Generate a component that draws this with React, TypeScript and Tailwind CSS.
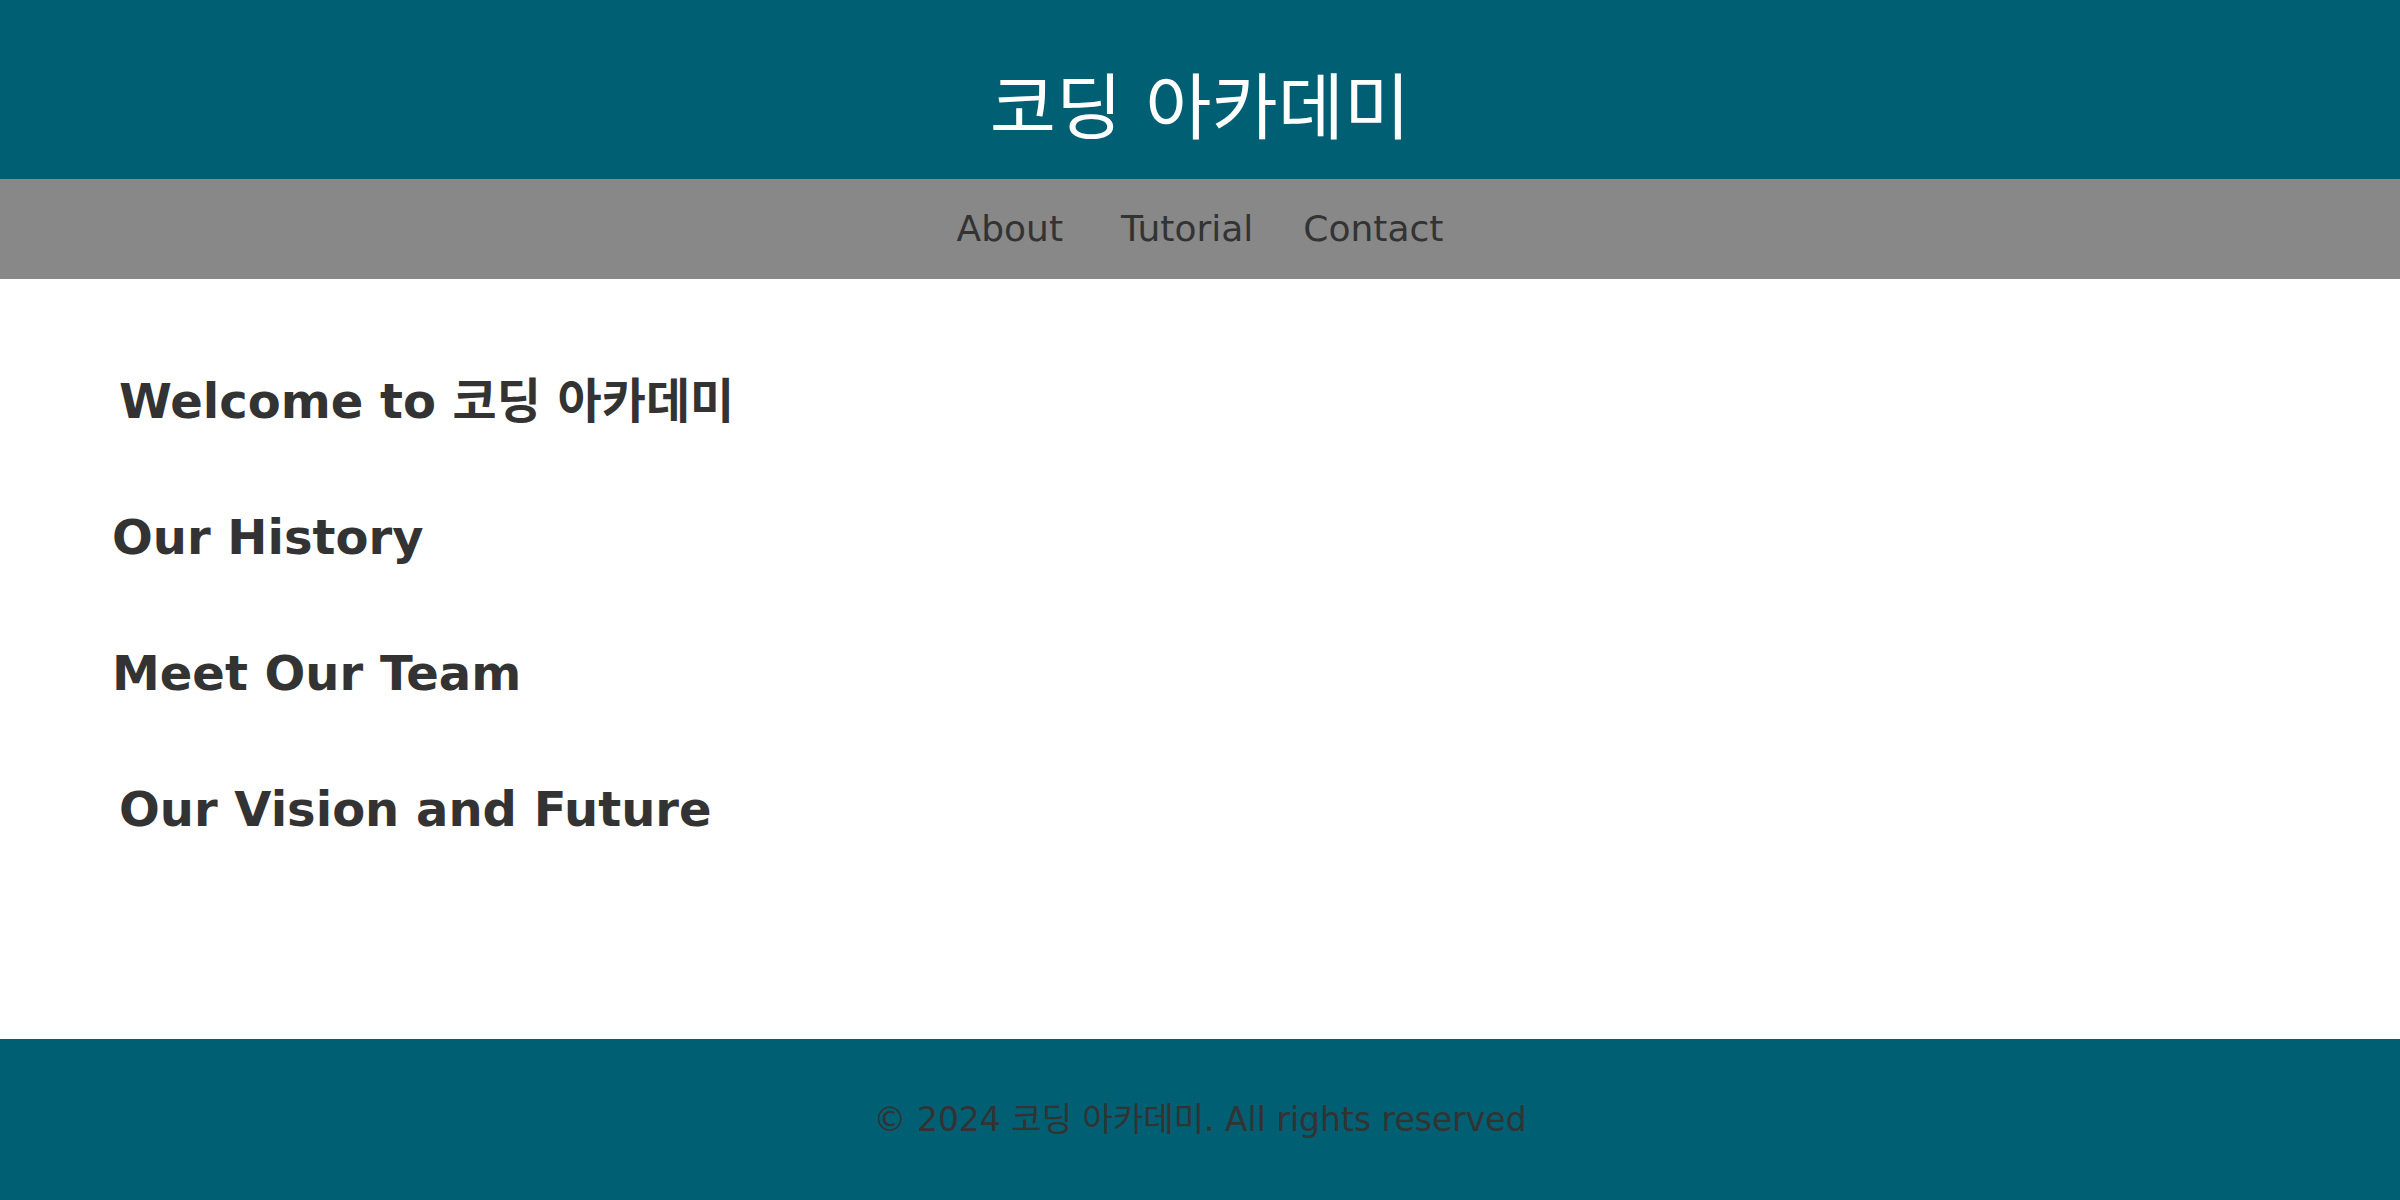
export default function App() {
  const font = "font-['DejaVu_Sans','Noto_Sans_CJK_KR',sans-serif]";

  return (
    <div className={`min-h-screen flex flex-col bg-white ${font}`}>
      {/* Header */}
      <header className="h-[179px] bg-[#005f73] flex justify-center pt-[66px]">
        <h1 className="text-[72px] leading-[84px] font-normal text-white">
          코딩 아카데미
        </h1>
      </header>

      {/* Nav */}
      <nav className="h-[100px] bg-[#888888] flex items-center justify-center text-[36px] text-[#333333]">
        <a className="mr-[58px]">About</a>
        <a className="mr-[50px]">Tutorial</a>
        <a>Contact</a>
      </nav>

      {/* Content */}
      <main className="h-[760px] flex flex-col gap-[80px] pt-[94px] text-[48px] leading-[56px] font-bold text-[#333333]">
        <section className="pl-[119px]">
          <h2>Welcome to 코딩 아카데미</h2>
        </section>
        <section className="pl-[112px]">
          <h2>Our History</h2>
        </section>
        <section className="pl-[112px]">
          <h2>Meet Our Team</h2>
        </section>
        <section className="pl-[119px]">
          <h2>Our Vision and Future</h2>
        </section>
      </main>

      {/* Footer */}
      <footer className="h-[161px] bg-[#005f73] flex items-center justify-center text-[33px] text-[#333333]">
        <p>© 2024 코딩 아카데미. All rights reserved</p>
      </footer>
    </div>
  );
}
